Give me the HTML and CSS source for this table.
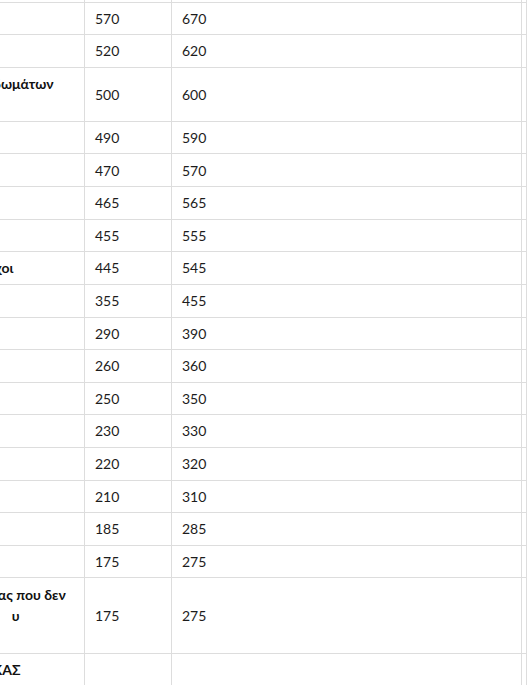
FILE: index.html
```html
<!DOCTYPE html>
<html lang="el">
<head>
<meta charset="utf-8">
<title>Τιμοκατάλογος</title>
<link rel="stylesheet" href="styles.css">
</head>
<body>
<div class="viewport">
  <table class="prices">
    <colgroup>
      <col class="c-desc">
      <col class="c-a">
      <col class="c-b">
      <col class="c-edge">
    </colgroup>
    <tbody>
      <tr><td class="desc">Ηλεκτρολογικές εργασίες</td><td>620</td><td>720</td><td class="edge"></td></tr>
      <tr><td class="desc">Ηλεκτρολογικός πίνακας</td><td>570</td><td>670</td><td class="edge"></td></tr>
      <tr><td class="desc">Ηλεκτρολογική μελέτη</td><td>520</td><td>620</td><td class="edge"></td></tr>
      <tr><td class="desc">Επισκευές και ανακαίνιση των δωμάτων και κοινόχρηστων χώρων</td><td>500</td><td>600</td><td class="edge"></td></tr>
      <tr><td class="desc">Αντικατάσταση κουφωμάτων</td><td>490</td><td>590</td><td class="edge"></td></tr>
      <tr><td class="desc">Τοποθέτηση πλακιδίων</td><td>470</td><td>570</td><td class="edge"></td></tr>
      <tr><td class="desc">Υδραυλική εγκατάσταση</td><td>465</td><td>565</td><td class="edge"></td></tr>
      <tr><td class="desc">Θερμομόνωση ταράτσας</td><td>455</td><td>555</td><td class="edge"></td></tr>
      <tr><td class="desc">Επιχρίσματα και εξωτερικοί τοίχοι</td><td>445</td><td>545</td><td class="edge"></td></tr>
      <tr><td class="desc">Ψευδοροφές γυψοσανίδας</td><td>355</td><td>455</td><td class="edge"></td></tr>
      <tr><td class="desc">Βαφή κιγκλιδωμάτων</td><td>290</td><td>390</td><td class="edge"></td></tr>
      <tr><td class="desc">Αδιαβροχοποίηση</td><td>260</td><td>360</td><td class="edge"></td></tr>
      <tr><td class="desc">Επένδυση με ξύλο</td><td>250</td><td>350</td><td class="edge"></td></tr>
      <tr><td class="desc">Τοποθέτηση δαπέδου</td><td>230</td><td>330</td><td class="edge"></td></tr>
      <tr><td class="desc">Αποξήλωση πλακιδίων</td><td>220</td><td>320</td><td class="edge"></td></tr>
      <tr><td class="desc">Καθαίρεση τοιχοποιίας</td><td>210</td><td>310</td><td class="edge"></td></tr>
      <tr><td class="desc">Μικροεπισκευές</td><td>185</td><td>285</td><td class="edge"></td></tr>
      <tr><td class="desc">Μεταφορά υλικών</td><td>175</td><td>275</td><td class="edge"></td></tr>
      <tr><td class="desc">Λοιπές υπηρεσίες της ειδικότητας που δεν<br>αναφέρονται στον ίδιο πίνακα&emsp;&ensp; υ<br>(ανά ώρα)</td><td>175</td><td>275</td><td class="edge"></td></tr>
      <tr><td class="desc">ΣΥΝΟΠΤΙΚΟΣ ΤΕΛΙΚΟΣ ΠΙΝΑΚΑΣ</td><td></td><td></td><td class="edge"></td></tr>
      <tr><td class="desc">Οι τιμές είναι ενδεικτικές</td><td></td><td></td><td class="edge"></td></tr>
    </tbody>
  </table>
</div>
</body>
</html>
```
FILE: styles.css
```css
html, body {
  margin: 0;
  padding: 0;
  background: #ffffff;
}

.viewport {
  width: 530px;
  height: 685px;
  overflow: hidden;
}

.prices {
  table-layout: fixed;
  width: 737px;
  border-collapse: separate;
  border-spacing: 0;
  margin-left: -210px;
  margin-top: -29.9px;
  font-family: "Lato", "Noto Sans", sans-serif;
  font-size: 14px;
  line-height: 21.3px;
  color: #1c1c1c;
}

.c-desc { width: 295px; }
.c-a { width: 87px; }
.c-b { width: 350px; }
.c-edge { width: 5px; }

.prices td {
  padding: 5.17px 10px;
  border-right: 1px solid #dddddd;
  border-bottom: 1px solid #dddddd;
  vertical-align: middle;
  text-align: left;
}

.prices td.desc {
  font-weight: 700;
  color: #111111;
}

.prices td.edge {
  padding: 0;
}
```
